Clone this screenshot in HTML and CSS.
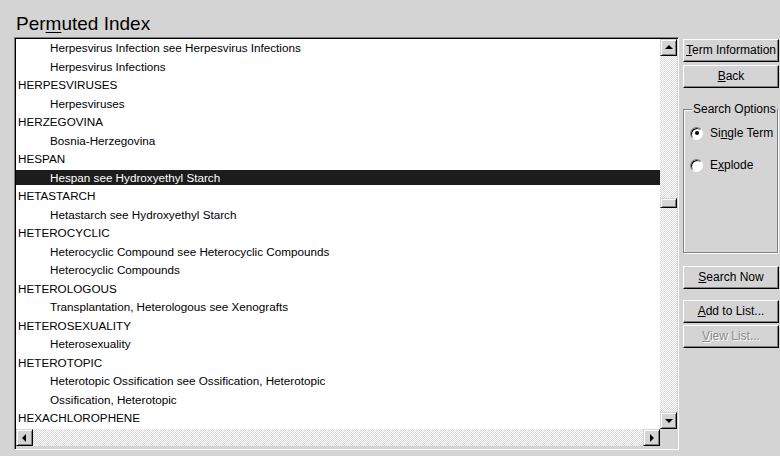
FILE: index.html
```html
<!DOCTYPE html>
<html>
<head>
<meta charset="utf-8">
<title>Permuted Index</title>
<link rel="stylesheet" href="styles.css">
</head>
<body>
<div class="window">
  <div class="title">Per<u>m</u>uted Index</div>
  <div class="main">
    <div class="listbox">
      <div class="list-area">
        <div class="rows">
          <div class="row sub">Herpesvirus Infection see Herpesvirus Infections</div>
          <div class="row sub">Herpesvirus Infections</div>
          <div class="row">HERPESVIRUSES</div>
          <div class="row sub">Herpesviruses</div>
          <div class="row">HERZEGOVINA</div>
          <div class="row sub">Bosnia-Herzegovina</div>
          <div class="row">HESPAN</div>
          <div class="row sub selected">Hespan see Hydroxyethyl Starch</div>
          <div class="row">HETASTARCH</div>
          <div class="row sub">Hetastarch see Hydroxyethyl Starch</div>
          <div class="row">HETEROCYCLIC</div>
          <div class="row sub">Heterocyclic Compound see Heterocyclic Compounds</div>
          <div class="row sub">Heterocyclic Compounds</div>
          <div class="row">HETEROLOGOUS</div>
          <div class="row sub">Transplantation, Heterologous see Xenografts</div>
          <div class="row">HETEROSEXUALITY</div>
          <div class="row sub">Heterosexuality</div>
          <div class="row">HETEROTOPIC</div>
          <div class="row sub">Heterotopic Ossification see Ossification, Heterotopic</div>
          <div class="row sub">Ossification, Heterotopic</div>
          <div class="row">HEXACHLOROPHENE</div>
        </div>
        <div class="vscroll">
          <div class="sbtn"><span class="arrow up"></span></div>
          <div class="track vtrack"><div class="thumb"></div></div>
          <div class="sbtn"><span class="arrow down"></span></div>
        </div>
      </div>
      <div class="hbar">
        <div class="hscroll">
          <div class="sbtn"><span class="arrow left"></span></div>
          <div class="track"></div>
          <div class="sbtn"><span class="arrow right"></span></div>
        </div>
        <div class="corner"></div>
      </div>
    </div>

    <div class="side">
      <div class="btn btn-first"><u>T</u>erm Information</div>
      <div class="btn"><u>B</u>ack</div>
      <fieldset class="group">
        <legend>Search Options</legend>
        <div class="option"><span class="radio checked"></span><span>Si<u>n</u>gle Term</span></div>
        <div class="option"><span class="radio"></span><span>E<u>x</u>plode</span></div>
      </fieldset>
      <div class="btn btn-search"><u>S</u>earch Now</div>
      <div class="btn btn-add"><u>A</u>dd to List...</div>
      <div class="btn disabled"><u>V</u>iew List...</div>
    </div>
  </div>
</div>
</body>
</html>
```
FILE: styles.css
```css
* {
  box-sizing: border-box;
}

body {
  margin: 0;
  width: 780px;
  height: 456px;
  overflow: hidden;
  background: #d4d4d4;
  font-family: "Liberation Sans", Arial, sans-serif;
  font-size: 11.7px;
  color: #000;
}

.window {
  padding-left: 14px;
}

/* dialog heading */
.title {
  font-size: 19px;
  line-height: 21px;
  height: 37px;
  padding-top: 13px;
  padding-left: 2px;
}

.title u {
  text-underline-offset: 2px;
}

u {
  text-underline-offset: 1px;
}

.main {
  display: flex;
  gap: 4px;
}

/* sunken list frame */
.listbox {
  width: 665px;
  height: 413px;
  border: 1px solid;
  border-color: #808080 #fff #fff #808080;
  box-shadow: inset 1px 1px #000, inset -1px -1px #d4d4d4;
  padding: 1px 1px 2px 1px;
  display: flex;
  flex-direction: column;
}

.list-area {
  display: flex;
  height: 390px;
}

.rows {
  flex: 1;
  background: #fff;
  overflow: hidden;
}

.row {
  height: 18.5px;
  line-height: 18.5px;
  padding-left: 2px;
  white-space: nowrap;
}

.row.sub {
  padding-left: 34px;
}

.row.selected {
  color: #fff;
  background: linear-gradient(transparent 1px, #1c1c1c 1px, #1c1c1c 16px, transparent 16px);
}

/* scroll bars */
.vscroll {
  width: 17px;
  display: flex;
  flex-direction: column;
}

.track {
  flex: 1;
  background-color: #fff;
  background-image: repeating-conic-gradient(#d8d8d8 0 25%, #fff 0 50%);
  background-size: 2px 2px;
}

.vtrack {
  padding-top: 142px;
}

.thumb {
  height: 10px;
  background: #d4d4d4;
  border: 1px solid;
  border-color: #d4d4d4 #000 #000 #d4d4d4;
  box-shadow: inset 1px 1px #fff, inset -1px -1px #808080;
}

.sbtn {
  width: 17px;
  height: 17px;
  flex: none;
  background: #d4d4d4;
  border: 1px solid;
  border-color: #d4d4d4 #000 #000 #d4d4d4;
  box-shadow: inset 1px 1px #fff, inset -1px -1px #808080;
  display: flex;
  align-items: center;
  justify-content: center;
}

.arrow {
  width: 0;
  height: 0;
  border: 4px solid transparent;
}

.arrow.up {
  border-top-width: 0;
  border-bottom-color: #000;
  margin-top: -1px;
}

.arrow.down {
  border-bottom-width: 0;
  border-top-color: #000;
}

.arrow.left {
  border-left-width: 0;
  border-right-color: #000;
  margin-left: -1px;
}

.arrow.right {
  border-right-width: 0;
  border-left-color: #000;
}

.hbar {
  display: flex;
  height: 17px;
}

.hscroll {
  flex: 1;
  display: flex;
}

.corner {
  width: 17px;
  background: #d4d4d4;
}

/* right-hand command column */
.side {
  width: 96px;
  display: flex;
  flex-direction: column;
  padding-top: 2px;
  font-size: 12px;
}

.btn {
  height: 23px;
  flex: none;
  background: #d4d4d4;
  border: 1px solid;
  border-color: #fff #000 #000 #fff;
  box-shadow: inset -1px -1px #808080;
  text-align: center;
  line-height: 21px;
  white-space: nowrap;
}

.btn + .btn {
  margin-top: 3px;
}

.btn.btn-search {
  margin-top: 13px;
}

.btn.btn-add {
  margin-top: 11px;
}

.btn.disabled {
  margin-top: 2px;
  color: #8a8a8a;
  text-shadow: 1px 1px #fff;
}

.group {
  margin: 14px 1px 0 0;
  padding: 1px 0 0 6px;
  height: 151px;
  border: 1px solid #808080;
  box-shadow: inset 1px 1px #fff, 1px 1px #fff;
}

.group legend {
  padding: 0 1px;
  margin-left: 2px;
  background: #d4d4d4;
  line-height: 14px;
  white-space: nowrap;
}

.option {
  display: flex;
  align-items: center;
  height: 32px;
  gap: 7px;
  white-space: nowrap;
}

.radio {
  position: relative;
  flex: none;
  width: 13px;
  height: 13px;
  border-radius: 50%;
  background: #fff;
  border: 1px solid;
  border-color: #808080 #fff #fff #808080;
  box-shadow: inset 1px 1px #000;
}

.radio.checked::after {
  content: "";
  position: absolute;
  left: 3.5px;
  top: 3.5px;
  width: 4px;
  height: 4px;
  border-radius: 50%;
  background: #000;
}
```
